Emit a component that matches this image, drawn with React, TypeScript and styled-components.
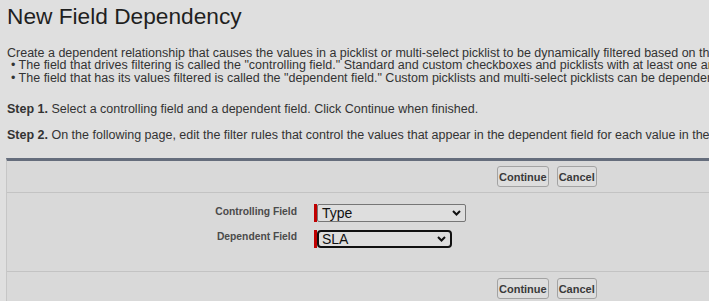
import React from "react";
import styled, { createGlobalStyle } from "styled-components";

const Global = createGlobalStyle`
  html, body { margin: 0; padding: 0; background: #dfdfdf; }
  body { font-family: "Liberation Sans", Arial, sans-serif; color: #333; overflow: hidden; }
`;

const Page = styled.div`
  width: 709px;
  height: 301px;
  overflow: hidden;
  padding: 0 0 0 7px;
  box-sizing: border-box;
  background: #dfdfdf;
`;

const Title = styled.h1`
  margin: 0;
  padding-top: 3px;
  font-size: 22.7px;
  font-weight: normal;
  color: #1f1f1f;
  line-height: 26px;
  white-space: nowrap;
`;

const Intro = styled.div`
  margin-top: 18px;
  font-size: 12.5px;
  line-height: 12.4px;
  white-space: nowrap;
`;

const Bullet = styled.div`
  padding-left: 4px;
`;

const Step = styled.p<{ $gap: number }>`
  margin: ${(p) => p.$gap}px 0 0;
  font-size: 12.5px;
  line-height: 14px;
  white-space: nowrap;
  b { color: #333; }
`;

const Panel = styled.div`
  margin-top: 16px;
  margin-left: -1px;
  width: 760px;
  background: #d9d9d9;
  border-top: 3px solid #656d7c;
  border-left: 1px solid #c6c6c6;
`;

const ButtonRow = styled.div<{ $top?: boolean }>`
  display: flex;
  align-items: center;
  gap: 8px;
  height: 31px;
  padding: ${(p) => (p.$top ? "0" : "1px")} 0 0 490px;
  border-bottom: ${(p) => (p.$top ? "1px solid #c3c3c3" : "none")};
`;

const Button = styled.button`
  height: 21px;
  margin: 0;
  padding: 0 1px;
  font-family: "Liberation Sans", Arial, sans-serif;
  font-size: 11px;
  font-weight: bold;
  color: #3a3a3a;
  background: #dddddd;
  border: 1px solid #a3a3a3;
  border-radius: 3px;
`;

const Form = styled.div`
  display: grid;
  grid-template-columns: 290px auto;
  column-gap: 17px;
  row-gap: 7.5px;
  align-items: center;
  align-content: start;
  padding: 11px 0 0 0;
  border-bottom: 1px solid #c3c3c3;
  box-sizing: border-box;
  height: 79px;
`;

const Label = styled.label`
  justify-self: end;
  padding-bottom: 4px;
  font-size: 10.3px;
  font-weight: bold;
  color: #4b4b4b;
  white-space: nowrap;
`;

const Required = styled.div`
  display: flex;
  align-items: stretch;
  justify-self: start;
  border-left: 3px solid #c00000;
`;

const SelectBox = styled.div<{ $w: number; $focus?: boolean }>`
  position: relative;
  width: ${(p) => p.$w}px;
  height: 18px;
  box-sizing: border-box;
  border: ${(p) => (p.$focus ? "2px solid #111" : "1px solid #767676")};
  border-radius: ${(p) => (p.$focus ? "4px" : "2px")};
  background: #dedede;
  display: flex;
  align-items: center;
  padding-left: ${(p) => (p.$focus ? "3px" : "4px")};
  font-size: 14px;
  color: #111;
`;

const Chevron = styled.svg`
  position: absolute;
  right: 4px;
  top: 50%;
  margin-top: -3px;
`;

function Select({ value, w, focus }: { value: string; w: number; focus?: boolean }) {
  return (
    <Required>
      <SelectBox $w={w} $focus={focus}>
        {value}
        <Chevron width="9" height="6" viewBox="0 0 9 6">
          <path d="M1 1 L4.5 4.5 L8 1" fill="none" stroke="#111" strokeWidth="2" />
        </Chevron>
      </SelectBox>
    </Required>
  );
}

export default function App() {
  return (
    <Page>
      <Global />
      <Title>New Field Dependency</Title>
      <Intro>
        <div>
          Create a dependent relationship that causes the values in a picklist or multi-select picklist to be dynamically filtered based on the value selected by the user in another field.
        </div>
        <Bullet>
          • The field that drives filtering is called the "controlling field." Standard and custom checkboxes and picklists with at least one and less than 300 values can be controlling fields.
        </Bullet>
        <Bullet>
          • The field that has its values filtered is called the "dependent field." Custom picklists and multi-select picklists can be dependent fields.
        </Bullet>
      </Intro>
      <Step $gap={17.5}>
        <b>Step 1.</b> Select a controlling field and a dependent field. Click Continue when finished.
      </Step>
      <Step $gap={12.7}>
        <b>Step 2.</b> On the following page, edit the filter rules that control the values that appear in the dependent field for each value in the controlling field.
      </Step>
      <Panel>
        <ButtonRow $top>
          <Button>Continue</Button>
          <Button>Cancel</Button>
        </ButtonRow>
        <Form>
          <Label>Controlling Field</Label>
          <Select value="Type" w={149} />
          <Label>Dependent Field</Label>
          <Select value="SLA" w={135} focus />
        </Form>
        <ButtonRow>
          <Button>Continue</Button>
          <Button>Cancel</Button>
        </ButtonRow>
      </Panel>
    </Page>
  );
}
